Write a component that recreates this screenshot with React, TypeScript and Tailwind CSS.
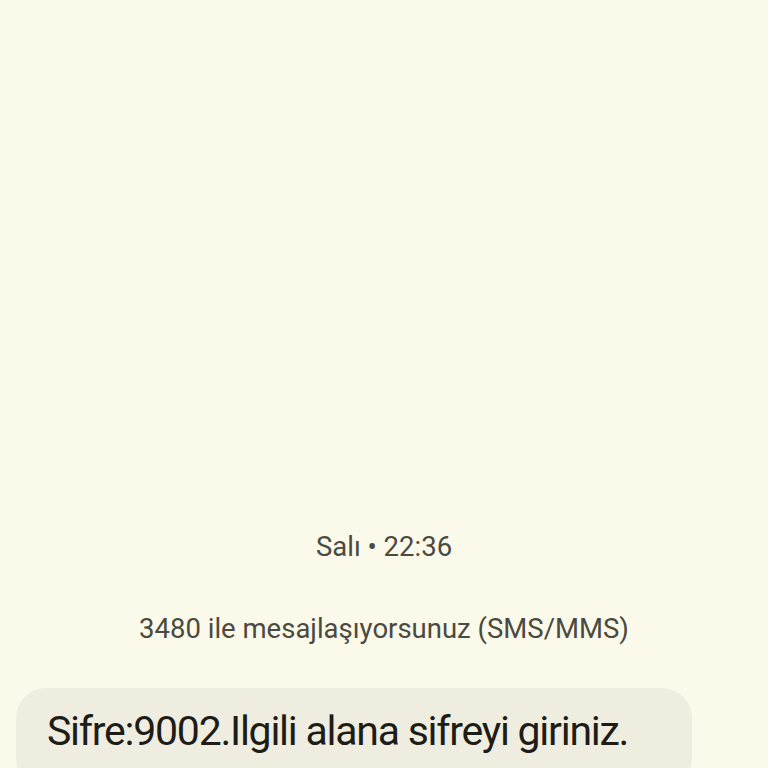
export default function App() {
  return (
    <div
      className="w-[768px] h-[768px] overflow-hidden bg-[#fbf9e9] flex flex-col justify-end"
      style={{ fontFamily: "Roboto, 'Noto Sans', sans-serif" }}
    >
      <div className="text-center text-[27.5px] leading-none text-[#4b4a40] mb-[54px]">
        Salı • 22:36
      </div>
      <div className="text-center text-[27.5px] leading-none text-[#4b4a40] mb-[46px]">
        3480 ile mesajlaşıyorsunuz (SMS/MMS)
      </div>
      <div className="ml-[16px] w-[676px] h-[100px] -mb-[20px] rounded-[30px] bg-[#efede0] pl-[31px] pt-[23px]">
        <span className="text-[41px] leading-none text-[#1d1c16] tracking-[-1.25px]">
          Sifre:9002.Ilgili alana sifreyi giriniz.
        </span>
      </div>
    </div>
  );
}
